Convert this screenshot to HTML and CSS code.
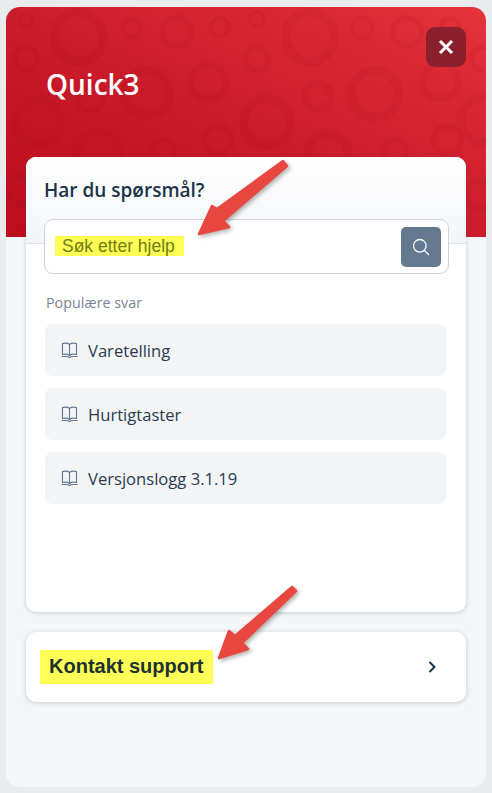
FILE: index.html
```html
<!DOCTYPE html>
<html lang="no">

<head>
    <meta charset="utf-8">
    <meta name="viewport" content="width=device-width, initial-scale=1.0">
    <title>Quick3 hjelp</title>
    <link rel="stylesheet" href="styles.css">
</head>

<body>
    <div class="panel">
        <header class="topp">
            <svg class="ringer" viewBox="6 7 480 230" aria-hidden="true">
                <g fill="none" stroke="#8c0a18" stroke-opacity="0.09">
                    <circle cx="26" cy="21" r="6.5" stroke-width="3"/>
                    <circle cx="79" cy="37" r="24.5" stroke-width="9"/>
                    <circle cx="132" cy="28" r="9" stroke-width="4"/>
                    <circle cx="177" cy="32" r="14.5" stroke-width="5"/>
                    <circle cx="220" cy="27" r="9" stroke-width="4"/>
                    <circle cx="257" cy="19" r="7.5" stroke-width="3"/>
                    <circle cx="310" cy="37" r="24.5" stroke-width="9"/>
                    <circle cx="362" cy="28" r="10" stroke-width="4"/>
                    <circle cx="407" cy="32" r="14.5" stroke-width="5"/>
                    <circle cx="450" cy="27" r="9" stroke-width="4"/>
                    <circle cx="26" cy="59" r="11.5" stroke-width="5"/>
                    <circle cx="257" cy="59" r="11.5" stroke-width="5"/>
                    <circle cx="483" cy="59" r="11.5" stroke-width="5"/>
                    <circle cx="208" cy="82" r="17.5" stroke-width="7"/>
                    <circle cx="147" cy="93" r="22.5" stroke-width="9"/>
                    <circle cx="90" cy="98" r="13" stroke-width="5"/>
                    <circle cx="38" cy="122" r="22.5" stroke-width="9"/>
                    <circle cx="318" cy="96" r="13" stroke-width="6"/>
                    <circle cx="375" cy="94" r="23.5" stroke-width="9"/>
                    <circle cx="440" cy="82" r="17.5" stroke-width="7"/>
                    <circle cx="267" cy="122" r="23.5" stroke-width="9"/>
                    <circle cx="218" cy="140" r="14" stroke-width="6"/>
                    <circle cx="447" cy="140" r="14" stroke-width="6"/>
                    <circle cx="98" cy="153" r="21" stroke-width="8"/>
                    <circle cx="163" cy="152" r="12" stroke-width="5"/>
                    <circle cx="328" cy="153" r="20" stroke-width="8"/>
                    <circle cx="395" cy="152" r="12" stroke-width="5"/>
                    <circle cx="483" cy="120" r="22.5" stroke-width="9"/>
                    <circle cx="20" cy="190" r="14" stroke-width="6"/>
                    <circle cx="480" cy="195" r="14" stroke-width="6"/>
                </g>
            </svg>
            <h1 class="tittel">Quick3</h1>
            <button class="lukk" aria-label="Lukk">
                <svg viewBox="0 0 16 16" width="16" height="16">
                    <path d="M2 2 L14 14 M14 2 L2 14" fill="none" stroke="#fff" stroke-width="3"/>
                </svg>
            </button>
        </header>

        <main class="innhold">
            <section class="kort">
                <div class="kort-topp">
                    <h2>Har du spørsmål?</h2>
                    <div class="sok">
                        <span class="sok-tekst">Søk etter hjelp</span>
                        <button class="sok-knapp" aria-label="Søk">
                            <svg viewBox="0 0 18 18" width="18" height="18">
                                <circle cx="7.8" cy="7.8" r="6.3" fill="none" stroke="#fff" stroke-width="1.3"/>
                                <path d="M12.4 12.4 L17 17" fill="none" stroke="#fff" stroke-width="1.3"/>
                            </svg>
                        </button>
                    </div>
                </div>
                <p class="populaere">Populære svar</p>
                <ul class="svar">
                    <li>
                        <svg class="bok" viewBox="0 0 17 16" width="17" height="16">
                            <path d="M8.5 2.5 C7 1 4 1 1.5 1.5 V12.5 C4 12 7 12 8.5 13.5 C10 12 13 12 15.5 12.5 V1.5 C13 1 10 1 8.5 2.5 V13.5 M0.5 14.5 H6.5 C7.5 14.5 7.5 15.5 8.5 15.5 C9.5 15.5 9.5 14.5 10.5 14.5 H16.5" fill="none" stroke="currentColor" stroke-width="1.1"/>
                        </svg>
                        Varetelling
                    </li>
                    <li>
                        <svg class="bok" viewBox="0 0 17 16" width="17" height="16">
                            <path d="M8.5 2.5 C7 1 4 1 1.5 1.5 V12.5 C4 12 7 12 8.5 13.5 C10 12 13 12 15.5 12.5 V1.5 C13 1 10 1 8.5 2.5 V13.5 M0.5 14.5 H6.5 C7.5 14.5 7.5 15.5 8.5 15.5 C9.5 15.5 9.5 14.5 10.5 14.5 H16.5" fill="none" stroke="currentColor" stroke-width="1.1"/>
                        </svg>
                        Hurtigtaster
                    </li>
                    <li>
                        <svg class="bok" viewBox="0 0 17 16" width="17" height="16">
                            <path d="M8.5 2.5 C7 1 4 1 1.5 1.5 V12.5 C4 12 7 12 8.5 13.5 C10 12 13 12 15.5 12.5 V1.5 C13 1 10 1 8.5 2.5 V13.5 M0.5 14.5 H6.5 C7.5 14.5 7.5 15.5 8.5 15.5 C9.5 15.5 9.5 14.5 10.5 14.5 H16.5" fill="none" stroke="currentColor" stroke-width="1.1"/>
                        </svg>
                        Versjonslogg 3.1.19
                    </li>
                </ul>
            </section>

            <section class="kontakt">
                <span class="kontakt-tekst">Kontakt support</span>
                <svg viewBox="0 0 8 12" width="8" height="12">
                    <path d="M1.5 1 L6.5 6 L1.5 11" fill="none" stroke="#1b3548" stroke-width="2"/>
                </svg>
            </section>
        </main>
    </div>

    <!-- piler tegnet oppå skjermbildet -->
    <svg class="piler" viewBox="0 0 492 793" aria-hidden="true">
        <path d="M287 166 L283 161 L217 209 L212 206 L199 234 L229 227 L223 221 Z" fill="#e8473f" stroke="#e8473f" stroke-width="2.5" stroke-linejoin="round"/>
        <path d="M296 591 L292 587 L235 636 L229 631 L219 658 L248 649 L242 643 Z" fill="#e8473f" stroke="#e8473f" stroke-width="2.5" stroke-linejoin="round"/>
    </svg>
</body>

</html>
```

FILE: styles.css
```css
* {
    box-sizing: border-box;
}

body {
    margin: 0;
    padding: 7px 6px 6px;
    height: 793px;
    background-color: #e9ebec;
    font-family: "Open Sans", "Noto Sans", sans-serif;
    position: relative;
    overflow: hidden;
}

.panel {
    height: 780px;
    border-radius: 14px;
    overflow: hidden;
    background-color: #f4f6f8;
}

/* rod topp */
.topp {
    height: 230px;
    position: relative;
    display: flex;
    justify-content: space-between;
    align-items: flex-start;
    padding: 20px 20px 0 40px;
    background: linear-gradient(25deg, #bb0d1c 0%, #cc1b2a 50%, #e6333b 100%);
}

.ringer {
    position: absolute;
    top: 0;
    left: 0;
    width: 100%;
    height: 100%;
}

.tittel {
    position: relative;
    margin: 39px 0 0;
    color: #fff;
    font-size: 28px;
    font-weight: 600;
    line-height: 36px;
}

.lukk {
    position: relative;
    width: 40px;
    height: 40px;
    border: none;
    border-radius: 9px;
    padding: 0;
    background-color: #8a1f2e;
    display: flex;
    align-items: center;
    justify-content: center;
}

.innhold {
    padding: 0 20px;
    margin-top: -80px;
    position: relative;
}

/* kort med sok */
.kort {
    height: 455px;
    background-color: #fff;
    border-radius: 10px;
    box-shadow: 0 1px 4px rgba(60, 80, 100, 0.25);
}

.kort-topp {
    height: 87px;
    padding: 17px 17px 0 18px;
    border-radius: 10px 10px 0 0;
    border-bottom: 1px solid #dde1e6;
    background: linear-gradient(#fff, #f3f5f8);
}

.kort-topp h2 {
    margin: 0 0 12px;
    color: #1b3548;
    font-size: 19px;
    font-weight: 600;
    line-height: 33px;
}

.sok {
    height: 55px;
    display: flex;
    align-items: center;
    justify-content: space-between;
    padding: 0 7px 0 10px;
    background-color: #fff;
    border: 1px solid #ccd2d9;
    border-radius: 9px;
    position: relative;
}

.sok-tekst {
    height: 20px;
    width: 129px;
    margin-top: -1px;
    padding-left: 7px;
    background-color: #ffff55;
    color: #6f7d12;
    font-family: "Liberation Sans", sans-serif;
    font-size: 17.5px;
    line-height: 20px;
}

.sok-knapp {
    width: 40px;
    height: 40px;
    border: none;
    border-radius: 5px;
    padding: 0;
    background-color: #64788f;
    display: flex;
    align-items: center;
    justify-content: center;
}

.populaere {
    margin: 49px 0 0 20px;
    color: #7c8591;
    font-size: 14.3px;
    line-height: 20px;
}

.svar {
    list-style: none;
    margin: 11px 20px 0 19px;
    padding: 0;
    display: flex;
    flex-direction: column;
    gap: 12px;
}

.svar li {
    height: 52px;
    display: flex;
    align-items: center;
    gap: 10px;
    padding-left: 16px;
    background-color: #f2f4f6;
    border-radius: 8px;
    color: #2a3d4d;
    font-size: 16.6px;
}

.bok {
    color: #64788f;
}

/* kontakt support */
.kontakt {
    height: 70px;
    margin-top: 20px;
    display: flex;
    align-items: center;
    justify-content: space-between;
    padding: 0 30px 0 14px;
    background-color: #fff;
    border-radius: 10px;
    box-shadow: 0 1px 5px rgba(60, 80, 100, 0.25);
}

.kontakt-tekst {
    width: 173px;
    height: 34px;
    margin-top: -1px;
    padding-left: 9px;
    background-color: #ffff55;
    color: #1b3230;
    font-family: "Liberation Sans", sans-serif;
    font-size: 20px;
    font-weight: 700;
    line-height: 33px;
}

.piler {
    position: absolute;
    top: 0;
    left: 0;
    width: 492px;
    height: 793px;
    filter: drop-shadow(2px 2px 2px rgba(0, 0, 0, 0.3));
}
```
